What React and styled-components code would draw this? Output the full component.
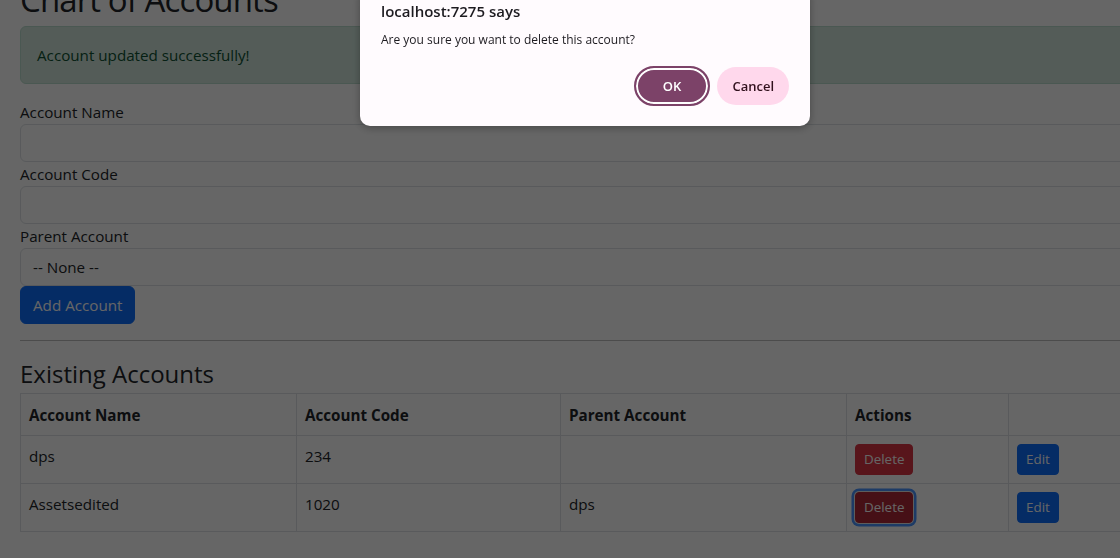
import styled, { createGlobalStyle } from "styled-components";

const GlobalStyle = createGlobalStyle`
  html, body {
    margin: 0;
    padding: 0;
    overflow: hidden;
    background: #ffffff;
  }
  body {
    font-family: "Open Sans", "Noto Sans", sans-serif;
    color: #212529;
    font-size: 15.2px;
    line-height: 24px;
  }
`;

const Page = styled.div`
  width: 1180px;
  padding: 0 20px;
  margin-top: -22px;
`;

const Title = styled.h1`
  margin: 0 0 4px;
  font-size: 33px;
  font-weight: 500;
  letter-spacing: -0.9px;
  line-height: 44px;
`;

const Alert = styled.div`
  margin-bottom: 16px;
  padding: 16px;
  border: 1px solid #badbcc;
  border-radius: 6px;
  background: #d1e7dd;
  color: #0f5132;
`;

const Form = styled.form`
  display: flex;
  flex-direction: column;
  align-items: flex-start;
`;

const Label = styled.label`
  display: block;
  line-height: 24px;
`;

const Field = styled.div`
  box-sizing: border-box;
  width: 100%;
  height: 38px;
  padding: 6px 12px;
  border: 1px solid #dee2e6;
  border-radius: 6px;
  background: #fff;
  line-height: 24px;
`;

const Button = styled.button`
  font-family: inherit;
  font-size: ${({ $small }) => ($small ? "13.4px" : "15.2px")};
  line-height: ${({ $small }) => ($small ? "21px" : "24px")};
  padding: ${({ $small }) => ($small ? "4px 8px" : "6px 12px")};
  border: 1px solid ${({ $color }) => $color};
  border-radius: ${({ $small }) => ($small ? "4px" : "6px")};
  background: ${({ $color }) => $color};
  color: #fff;
  cursor: pointer;
  box-shadow: ${({ $focus }) => ($focus ? "0 0 0 1px #e8e8e8, 0 0 0 3.5px #4a94ff" : "none")};
`;

const Divider = styled.hr`
  margin: 16px 0;
  border: 0;
  border-top: 1px solid #bfbfbf;
`;

const SectionTitle = styled.h3`
  margin: 0 0 3px;
  font-size: 24px;
  font-weight: 500;
  line-height: 33px;
`;

const Table = styled.table`
  width: 100%;
  table-layout: fixed;
  border-collapse: collapse;
`;

const Th = styled.th`
  text-align: left;
  font-weight: 700;
  padding: 8px;
  border: 1px solid #dee2e6;
  line-height: 24px;
  height: 25px;
`;

const Td = styled.td`
  padding: 8px;
  border: 1px solid #dee2e6;
  line-height: 24px;
  height: 31px;
  vertical-align: top;
`;

const Overlay = styled.div`
  position: fixed;
  inset: 0;
  background: rgba(0, 0, 0, 0.6);
`;

const Dialog = styled.div`
  position: fixed;
  top: -12px;
  left: 360px;
  width: 450px;
  box-sizing: border-box;
  padding: 13px 21px 20px;
  border-radius: 10px;
  background: #fffbfe;
  box-shadow: 0 2px 8px rgba(0, 0, 0, 0.3);
  font-family: "Open Sans", "Noto Sans", sans-serif;
`;

const DialogTitle = styled.div`
  font-size: 15px;
  font-weight: 600;
  line-height: 20px;
  color: #1d1b20;
`;

const DialogText = styled.div`
  margin-top: 10px;
  font-size: 12px;
  line-height: 18px;
  color: #1d1b20;
`;

const DialogActions = styled.div`
  display: flex;
  justify-content: flex-end;
  align-items: center;
  gap: 7px;
  margin-top: 17px;
`;

const DialogButton = styled.button`
  font-family: inherit;
  font-size: 13px;
  font-weight: 600;
  height: ${({ $primary }) => ($primary ? "40px" : "38px")};
  padding: 0 ${({ $primary }) => ($primary ? "27px" : "15px")};
  border-radius: 20px;
  border: ${({ $primary }) => ($primary ? "2px solid #7c4268" : "none")};
  background: ${({ $primary }) => ($primary ? "#7c4268" : "#ffd8ec")};
  color: ${({ $primary }) => ($primary ? "#ffffff" : "#31111d")};
  box-shadow: ${({ $primary }) => ($primary ? "inset 0 0 0 2px #ffffff" : "none")};
`;

const accounts = [
  { name: "dps", code: "234", parent: "" },
  { name: "Assetsedited", code: "1020", parent: "dps", focused: true },
];

export default function App() {
  return (
    <>
      <GlobalStyle />
      <Page>
        <Title>Chart of Accounts</Title>
        <Alert>Account updated successfully!</Alert>
        <Form>
          <Label>Account Name</Label>
          <Field />
          <Label>Account Code</Label>
          <Field />
          <Label>Parent Account</Label>
          <Field>-- None --</Field>
          <Button type="button" $color="#0d6efd">Add Account</Button>
        </Form>
        <Divider />
        <SectionTitle>Existing Accounts</SectionTitle>
        <Table>
          <colgroup>
            <col style={{ width: 276 }} />
            <col style={{ width: 264 }} />
            <col style={{ width: 286 }} />
            <col style={{ width: 162 }} />
            <col />
          </colgroup>
          <thead>
            <tr>
              <Th>Account Name</Th>
              <Th>Account Code</Th>
              <Th>Parent Account</Th>
              <Th>Actions</Th>
              <Th />
            </tr>
          </thead>
          <tbody>
            {accounts.map((a) => (
              <tr key={a.name}>
                <Td>{a.name}</Td>
                <Td>{a.code}</Td>
                <Td>{a.parent}</Td>
                <Td>
                  <Button
                    type="button"
                    $small
                    $focus={a.focused}
                    $color={a.focused ? "#b02a37" : "#dc3545"}
                  >
                    Delete
                  </Button>
                </Td>
                <Td>
                  <Button type="button" $small $color="#0d6efd">Edit</Button>
                </Td>
              </tr>
            ))}
          </tbody>
        </Table>
      </Page>
      <Overlay />
      <Dialog>
        <DialogTitle>localhost:7275 says</DialogTitle>
        <DialogText>Are you sure you want to delete this account?</DialogText>
        <DialogActions>
          <DialogButton $primary>OK</DialogButton>
          <DialogButton>Cancel</DialogButton>
        </DialogActions>
      </Dialog>
    </>
  );
}
